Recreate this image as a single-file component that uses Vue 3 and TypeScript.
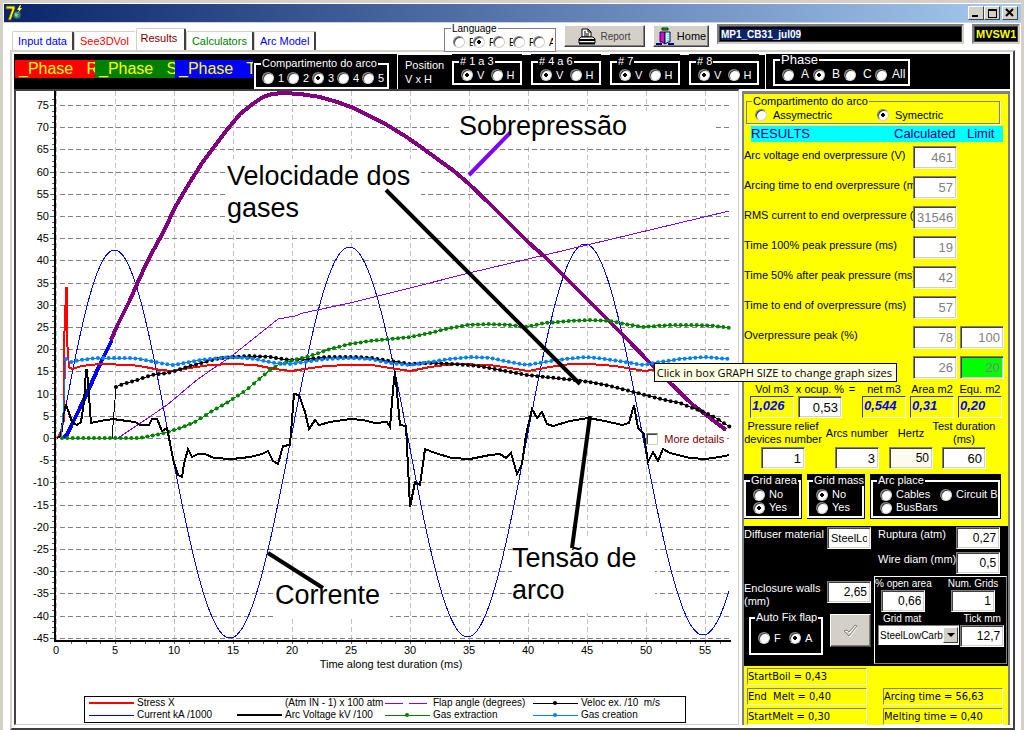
<script setup lang="ts">
import { onMounted, ref } from 'vue'

type Point = [number, number]

const fileInput = ref<HTMLInputElement | null>(null)
const fileName = ref('MP1_CB31_jul09')

onMounted(() => {
  fileInput.value?.focus()
  fileInput.value?.select()
})

const tabs = [
  { name: 'Input data', cls: 'blue' },
  { name: 'See3DVol', cls: 'red' },
  { name: 'Results', cls: 'active' },
  { name: 'Calculators', cls: 'green' },
  { name: 'Arc Model', cls: 'blue' },
]
const languages = ['E', 'F', 'E', 'F', 'A']
const phases = [
  { text: '_Phase   R', cls: 'bg-red' },
  { text: '_Phase   S', cls: 'bg-green' },
  { text: '_Phase   T', cls: 'bg-blue' },
]
const positions = ['# 1 a 3', '# 4 a 6', '# 7', '# 8']
const phaseOptions = ['A', 'B', 'C', 'All']

const results = [
  { label: 'Arc voltage end overpressure (V)', value: '461' },
  { label: 'Arcing time to end overpressure (ms)', value: '57' },
  { label: 'RMS current to end overpressure (A)', value: '31546' },
  { label: 'Time 100% peak pressure (ms)', value: '19' },
  { label: 'Time 50% after peak pressure (ms)', value: '42' },
  { label: 'Time to end of overpressure (ms)', value: '57' },
  { label: 'Overpressure peak (%)', value: '78', limit: '100' },
  { label: '', value: '26', limit: '20', ok: true },
]

// Plot geometry
const originX = 56
const originY = 438
const msStep = 11.8
const unitStep = 4.44
const markerStep = 16 / 3
const xAt = (t: number) => Math.round(originX + t * msStep)
const yAt = (v: number) => Math.round(originY - v * unitStep)

const xMajor = Array.from({ length: 12 }, (_, i) => i * 5)
const yMajor = Array.from({ length: 25 }, (_, i) => i * 5 - 45)
const xMinor = Array.from({ length: 45 }, (_, i) => (i + 1) * 1.25)
const yMinor = Array.from({ length: 98 }, (_, i) => i * 1.25 - 45)

const line = (pts: Point[]) => pts.map((p) => p.join(',')).join(' ')

function markers(pts: Point[]): Point[] {
  const out: Point[] = []
  let seg = 0
  for (let x = pts[0][0]; x <= pts[pts.length - 1][0]; x += markerStep) {
    while (seg < pts.length - 2 && pts[seg + 1][0] < x) seg++
    const [x0, y0] = pts[seg]
    const [x1, y1] = pts[seg + 1]
    out.push([x, y0 + ((y1 - y0) * (x - x0)) / (x1 - x0)])
  }
  return out
}

// Half waves of the current: zero crossings and peak heights
const crossings = [60, 169, 291, 408, 527, 643, 763]
const peaks = [188, -200, 191, -199, 194, -197]
const current: Point[] = []
for (let x = 61; x <= 729; x += 2) {
  let i = 0
  while (x > crossings[i + 1]) i++
  const phase = (x - crossings[i]) / (crossings[i + 1] - crossings[i])
  current.push([x, originY - peaks[i] * Math.sin(Math.PI * phase)])
}

const pressureStart: Point[] = [[63, 438], [67, 435], [71, 426], [80, 408], [88, 391], [100, 364], [112, 340]]
const pressure: Point[] = [[111, 340], [117, 326], [130, 300], [137, 284], [148, 260], [165, 229], [174, 209], [190, 182], [202, 163], [214, 147], [226, 131], [240, 114], [254, 103], [263, 97], [272, 94], [283, 93], [300, 94], [320, 97], [337, 102], [351, 107], [370, 116], [387, 125], [405, 136], [421, 147], [440, 161], [454, 171], [469, 184], [490, 204], [528, 242], [545, 257], [575, 287], [610, 322], [628, 340], [647, 360], [667, 380], [693, 405], [726, 430]]
const stress: Point[] = [[57, 438], [60, 434], [62, 427], [64, 420], [64, 340], [65, 322], [66, 288], [67, 288], [67, 340], [69, 367], [72, 369], [82, 366], [100, 364], [132, 365], [145, 367], [160, 370], [173, 371], [190, 368], [210, 365], [232, 364], [255, 365], [275, 369], [291, 371], [305, 369], [325, 366], [350, 365], [372, 365], [390, 368], [410, 371], [430, 367], [455, 364], [490, 365], [510, 368], [528, 371], [550, 367], [570, 364], [590, 364], [615, 366], [645, 371], [665, 368], [700, 365], [729, 367]]
const creation: Point[] = [[61, 438], [64, 400], [66, 359], [71, 362], [80, 360], [97, 358], [115, 358], [133, 358], [150, 361], [165, 364], [173, 365], [185, 363], [200, 360], [220, 358], [235, 357], [255, 359], [275, 363], [290, 364], [305, 362], [325, 359], [350, 358], [370, 359], [390, 363], [410, 365], [430, 362], [450, 359], [470, 357], [490, 358], [510, 362], [527, 365], [545, 362], [565, 359], [587, 357], [605, 359], [625, 362], [643, 365], [660, 362], [680, 359], [705, 357], [729, 359]]
const velocity: Point[] = [[116, 387], [123, 384], [137, 380], [152, 375], [167, 373], [175, 371], [190, 366], [205, 362], [215, 359], [232, 357], [250, 356], [270, 357], [290, 360], [310, 359], [327, 357], [355, 357], [372, 358], [390, 361], [410, 364], [430, 363], [450, 364], [470, 365], [490, 368], [510, 372], [527, 375], [545, 377], [575, 380], [590, 382], [610, 386], [630, 391], [645, 395], [665, 400], [680, 403], [690, 407], [704, 412], [716, 418], [722, 422], [730, 427]]
const extraction: Point[] = [[62, 438], [140, 438], [150, 436], [165, 433], [180, 428], [195, 422], [212, 411], [228, 402], [245, 391], [258, 380], [270, 370], [280, 364], [290, 361], [310, 356], [330, 349], [350, 344], [370, 341], [390, 339], [411, 337], [430, 333], [450, 328], [468, 325], [490, 324], [510, 325], [525, 327], [545, 323], [570, 321], [590, 320], [610, 321], [625, 324], [643, 327], [670, 325], [700, 325], [715, 326], [730, 328]]
const flap: Point[] = [[118, 438], [145, 420], [167, 405], [198, 379], [233, 355], [278, 319], [295, 316], [303, 313], [350, 303], [410, 288], [469, 273], [528, 259], [587, 245], [700, 218], [729, 211]]
const voltage: Point[] = [[57, 438], [61, 436], [64, 410], [66, 405], [68, 410], [72, 422], [77, 425], [81, 422], [84, 402], [86, 370], [87, 370], [91, 423], [100, 421], [113, 419], [127, 421], [135, 422], [140, 425], [149, 425], [152, 419], [157, 419], [162, 431], [167, 428], [170, 443], [174, 463], [178, 475], [182, 477], [184, 464], [188, 449], [192, 457], [198, 454], [205, 454], [214, 458], [232, 459], [250, 457], [262, 454], [268, 451], [273, 461], [278, 464], [283, 446], [290, 445], [294, 394], [299, 395], [305, 412], [309, 429], [315, 420], [319, 425], [330, 422], [350, 419], [363, 420], [375, 423], [387, 422], [390, 427], [393, 390], [395, 371], [400, 425], [406, 426], [410, 507], [415, 482], [420, 485], [425, 449], [435, 453], [452, 458], [470, 459], [490, 455], [500, 454], [506, 458], [511, 453], [517, 474], [522, 464], [526, 435], [532, 409], [537, 418], [542, 412], [547, 424], [553, 426], [570, 421], [588, 418], [605, 421], [622, 425], [629, 423], [634, 405], [638, 428], [644, 434], [648, 462], [653, 452], [658, 461], [663, 449], [670, 453], [690, 458], [705, 459], [720, 457], [729, 455]]

const plotLegend = [
  { x: 89, y: 703, label: 'Stress X', cls: 's-stress' },
  { x: 89, y: 715, label: 'Current kA /1000', cls: 's-current' },
  { x: 237, y: 703, label: '(Atm IN - 1) x 100 atm', cls: '' },
  { x: 237, y: 715, label: 'Arc Voltage kV /100', cls: 's-voltage' },
  { x: 385, y: 703, label: 'Flap angle (degrees)', cls: 's-flap dashed' },
  { x: 385, y: 715, label: 'Gas extraction', cls: 's-extraction', dot: 'd-extraction' },
  { x: 533, y: 703, label: 'Veloc ex. /10  m/s', cls: 's-velocity', dot: 'd-velocity' },
  { x: 533, y: 715, label: 'Gas creation', cls: 's-creation', dot: 'd-creation' },
]
</script>

<template>
  <div class="window">
    <header class="titlebar">
      <svg class="logo" width="18" height="18" viewBox="0 0 18 18" aria-hidden="true">
        <path d="M1 2h9v3L6 16H3L7 5H1z" fill="#ffee20" stroke="#4a4a10" />
        <circle cx="12" cy="11" r="4" fill="#2f8f5f" stroke="#335" />
        <path d="M10 9l3 1-1 3-2-1z" fill="#7fd0c0" />
        <path d="M15 1l-3 5h2l-1 3 4-5h-2l1-3z" fill="#ffff30" />
      </svg>
      <div class="controls">
        <button type="button" aria-label="Minimize"><svg width="10" height="10"><path d="M1 8h6" stroke="#000" stroke-width="2" /></svg></button>
        <button type="button" aria-label="Maximize"><svg width="10" height="10" shape-rendering="crispEdges"><path d="M1 1h8v8H1zM1 2h8" fill="none" stroke="#000" /></svg></button>
        <button type="button" class="close" aria-label="Close"><svg width="10" height="10"><path d="M1 1l7 7M8 1l-7 7" stroke="#000" stroke-width="2" /></svg></button>
      </div>
    </header>

    <div class="head">
      <nav class="tabs" role="tablist">
        <button v-for="t in tabs" :key="t.name" type="button" role="tab" class="tab" :class="t.cls">{{ t.name }}</button>
      </nav>
      <div class="tools">
        <fieldset class="group lang">
          <legend>Language</legend>
          <label v-for="(l, i) in languages" :key="i" class="opt"><input type="radio" name="lang" :checked="i === 1" />{{ l }}</label>
        </fieldset>
        <button type="button" class="btn report">
          <svg width="18" height="17" viewBox="0 0 18 17" aria-hidden="true">
            <path d="M4 9V1h6l3 3v5z" fill="#fff" stroke="#000" />
            <path d="M10 1v3h3M6 4h2M6 6h5M6 8h5" fill="none" stroke="#000" />
            <path d="M3 9h12l2 2v4H1v-4z" fill="#fff" stroke="#000" />
            <path d="M1 12h16M1 15.500h16" stroke="#000" stroke-width="2" />
            <path d="M12 10h2" stroke="#cc0" />
          </svg>
          <span>Report</span>
        </button>
        <button type="button" class="btn home">
          <svg width="18" height="18" viewBox="0 0 18 18" aria-hidden="true">
            <path d="M6 1h6v2H6z" fill="#0c0" stroke="#030" />
            <path d="M4 5h5v12l-3-2H4z" fill="#d010c0" stroke="#206" />
            <path d="M9 5h5v10h-2L9 17z" fill="#c8ffff" stroke="#005" />
            <path d="M0 17h6M12 17h6" stroke="#008" stroke-width="2" />
            <path d="M12 7v8" stroke="#0cc" stroke-dasharray="1 1" />
          </svg>
          <span>Home</span>
        </button>
        <input ref="fileInput" v-model="fileName" class="file" type="text" aria-label="File name" />
        <input class="file unit" type="text" value="MVSW1" aria-label="Unit" />
      </div>
    </div>

    <div class="page">
      <div class="toolbar">
        <div class="phases">
          <span v-for="p in phases" :key="p.text" :class="p.cls">{{ p.text }}</span>
        </div>
        <fieldset class="group arco">
          <legend>Compartimento do arco</legend>
          <label v-for="n in 5" :key="n" class="opt"><input type="radio" name="arco" :checked="n === 3" />{{ n }}</label>
        </fieldset>
        <div class="position">
          <p>Position<br />V x H</p>
          <div v-for="p in positions" :key="p" class="mask">
            <fieldset class="group vh">
              <legend>{{ p }}</legend>
              <label class="opt"><input type="radio" :name="p" checked />V</label>
              <label class="opt"><input type="radio" :name="p" />H</label>
            </fieldset>
          </div>
        </div>
        <fieldset class="group phase">
          <legend>Phase</legend>
          <label v-for="o in phaseOptions" :key="o" class="opt"><input type="radio" name="phase" :checked="o === 'B'" />{{ o }}</label>
        </fieldset>
      </div>

      <main class="main">
        <section class="chart">
          <svg class="plot" viewBox="16 91 722 632" role="img" aria-label="Arc test results">
            <g class="grid-x">
              <line v-for="t in xMajor" :key="t" :x1="xAt(t)" :x2="xAt(t)" y1="91" y2="640" />
            </g>
            <g class="grid-y">
              <line v-for="v in yMajor" :key="v" x1="60" x2="730" :y1="yAt(v)" :y2="yAt(v)" />
            </g>
            <g fill="#fff">
              <rect x="452" y="111" width="262" height="34" />
              <rect x="225" y="159" width="196" height="72" />
              <rect x="512" y="538" width="143" height="75" />
              <rect x="273" y="577" width="117" height="42" />
            </g>
            <g class="ticks">
              <line v-for="v in yMinor" :key="v" x1="52" x2="54" :y1="yAt(v)" :y2="yAt(v)" />
              <line v-for="v in yMajor" :key="v" x1="50" x2="54" :y1="yAt(v)" :y2="yAt(v)" />
              <line v-for="t in xMinor" :key="t" :x1="xAt(t)" :x2="xAt(t)" y1="642" y2="644" />
            </g>
            <path d="M55 91V641H731" fill="none" stroke="#000" stroke-width="2" />
            <g class="labels">
              <text v-for="v in yMajor" :key="v" x="49" :y="yAt(v) + 4" text-anchor="end">{{ v }}</text>
              <text v-for="t in xMajor" :key="t" :x="xAt(t)" y="654" text-anchor="middle">{{ t }}</text>
              <text x="391" y="668" text-anchor="middle">Time along test duration (ms)</text>
            </g>

            <polyline class="s-current" :points="line(current)" />
            <polyline class="s-flap" :points="line(flap)" />
            <polyline class="s-start" :points="line(pressureStart)" />
            <polyline class="s-pressure" :points="line(pressure)" />
            <polyline class="s-stress" :points="line(stress)" />
            <polyline class="s-velocity" points="62,438 112,438 116,387" />
            <polyline class="s-velocity" :points="line(velocity)" />
            <circle v-for="(m, i) in markers(velocity)" :key="i" class="d-velocity" :cx="m[0]" :cy="m[1]" r="2" />
            <polyline class="s-extraction" :points="line(extraction)" />
            <circle v-for="(m, i) in markers(extraction)" :key="i" class="d-extraction" :cx="m[0]" :cy="m[1]" r="2" />
            <polyline class="s-voltage" :points="line(voltage)" />
            <polyline class="s-creation" :points="line(creation)" />
            <circle v-for="(m, i) in markers(creation.slice(2))" :key="i" class="d-creation" :cx="m[0]" :cy="m[1]" r="2" />

            <path d="M510 133L469 175" stroke="#7f00ff" stroke-width="4" />
            <path d="M386 190L580 384M590 416L572 548M268 553L323 588" stroke="#000" stroke-width="4" />
            <g class="notes">
              <text x="459" y="135">Sobrepressão</text>
              <text x="227" y="185">Velocidade dos</text>
              <text x="227" y="217">gases</text>
              <text x="512" y="567">Tensão de</text>
              <text x="512" y="599">arco</text>
              <text x="275" y="604">Corrente</text>
            </g>

            <rect x="84" y="696" width="601" height="26" fill="#fff" stroke="#000" shape-rendering="crispEdges" />
            <g v-for="item in plotLegend" :key="item.label" class="key">
              <line v-if="item.cls" :class="item.cls" :x1="item.x" :x2="item.x + 45" :y1="item.y" :y2="item.y" />
              <circle v-if="item.dot" :class="item.dot" :cx="item.x + 22" :cy="item.y" r="2" />
              <text :x="item.x + 48" :y="item.y + 3">{{ item.label }}</text>
            </g>
          </svg>
          <label class="details"><input type="checkbox" />More details</label>
        </section>

        <aside class="side">
          <fieldset class="group sym">
            <legend>Compartimento do arco</legend>
            <label class="opt"><input type="radio" name="sym" />Assymectric</label>
            <label class="opt"><input type="radio" name="sym" checked />Symectric</label>
          </fieldset>
          <div class="resbar"><span>RESULTS</span><span>Calculated</span><span>Limit</span></div>
          <div class="results">
            <div v-for="(r, i) in results" :key="i" class="row">
              <label :for="'res' + i">{{ r.label }}</label>
              <input :id="'res' + i" class="field dim" type="text" :value="r.value" :aria-label="r.label || 'Calculated'" />
              <input v-if="r.limit" class="field dim" :class="{ ok: r.ok }" type="text" :value="r.limit" aria-label="Limit" />
            </div>
          </div>

          <div class="volumes">
            <div class="cell"><span>Vol m3</span><output class="calc">1,026</output></div>
            <label class="cell"><span>x ocup. %</span><input class="field" type="text" value="0,53" /></label>
            <div class="cell"><span>=</span></div>
            <div class="cell"><span>net m3</span><output class="calc">0,544</output></div>
            <div class="cell"><span>Area m2</span><output class="calc">0,31</output></div>
            <div class="cell"><span>Equ. m2</span><output class="calc">0,20</output></div>
          </div>

          <div class="params">
            <label class="cell"><span>Pressure relief<br />devices number</span><input class="field" type="text" value="1" /></label>
            <label class="cell"><span>Arcs number</span><input class="field" type="text" value="3" /></label>
            <label class="cell"><span>Hertz</span><input class="field cream" type="text" value="50" /></label>
            <label class="cell"><span>Test duration<br />(ms)</span><input class="field" type="text" value="60" /></label>
          </div>

          <div class="gridopts">
            <div class="black">
              <fieldset class="group stack">
                <legend>Grid area</legend>
                <label class="opt"><input type="radio" name="ga" />No</label>
                <label class="opt"><input type="radio" name="ga" checked />Yes</label>
              </fieldset>
            </div>
            <div class="black">
              <fieldset class="group stack">
                <legend>Grid mass</legend>
                <label class="opt"><input type="radio" name="gm" checked />No</label>
                <label class="opt"><input type="radio" name="gm" />Yes</label>
              </fieldset>
            </div>
            <div class="black wide">
              <fieldset class="group stack two">
                <legend>Arc place</legend>
                <label class="opt"><input type="radio" name="ap" />Cables</label>
                <label class="opt"><input type="radio" name="ap" />Circuit Breaker</label>
                <label class="opt"><input type="radio" name="ap" />BusBars</label>
              </fieldset>
            </div>
          </div>

          <div class="dark">
            <div class="dleft">
              <label class="line"><span>Diffuser material</span><input class="field text" type="text" value="SteelLo" /></label>
              <label class="line"><span>Enclosure walls<br />(mm)</span><input class="field small" type="text" value="2,65" /></label>
              <div class="line fix">
                <fieldset class="group flapfix">
                  <legend>Auto Fix flap</legend>
                  <label class="opt"><input type="radio" name="fix" />F</label>
                  <label class="opt"><input type="radio" name="fix" checked />A</label>
                </fieldset>
                <button type="button" class="btn check" aria-label="Apply">
                  <svg width="16" height="14" viewBox="0 0 16 14"><path d="M2 8l3-1 2 2 5-7 2 1-7 10z" fill="#d4d0c8" stroke="#fff" /><path d="M1 7l3-1 2 2 6-7 2 1-8 10z" fill="none" stroke="#808080" /></svg>
                </button>
              </div>
            </div>
            <div class="dright">
              <label class="line"><span>Ruptura (atm)</span><input class="field small" type="text" value="0,27" /></label>
              <label class="line"><span>Wire diam (mm)</span><input class="field small" type="text" value="0,5" /></label>
              <div class="gridbox">
                <div class="pair spaced">
                  <label class="cell"><span>% open area</span><input class="field small" type="text" value="0,66" /></label>
                  <label class="cell"><span>Num. Grids</span><input class="field small" type="text" value="1" /></label>
                </div>
                <div class="pair">
                  <label class="cell"><span class="mat">Grid mat</span>
                    <span class="pick">
                      <select><option>SteelLowCarb</option></select>
                      <i aria-hidden="true"></i>
                    </span>
                  </label>
                  <label class="cell"><span>Tick mm</span><input class="field small" type="text" value="12,7" /></label>
                </div>
              </div>
            </div>
          </div>

          <div class="outputs">
            <output>StartBoil = 0,43</output><span></span>
            <output>End&nbsp; Melt = 0,40</output><output>Arcing time = 56,63</output>
            <output>StartMelt = 0,30</output><output>Melting time = 0,40</output>
          </div>
        </aside>

        <div class="tip" role="tooltip">Click in box GRAPH SIZE to change graph sizes</div>
      </main>
    </div>
  </div>
</template>

<style>
body {
  margin: 0;
  background: #fff;
}
</style>

<style scoped>
* {
  box-sizing: border-box;
}
.window {
  min-height: 100vh;
  border: 3px solid #d4d0c8;
  border-bottom: 0;
  padding: 1px 0 0 1px;
  background: #fff;
  font: 11px/13px "Liberation Sans", Arial, sans-serif;
  color: #000;
}
button,
input,
select {
  font: inherit;
  margin: 0;
  padding: 0;
  border-radius: 0;
}
p {
  margin: 0;
}
.titlebar {
  height: 19px;
  border-bottom: 1px solid #d4d0c8;
  background: linear-gradient(90deg, #0a246a, #a6caf0);
  display: flex;
  justify-content: space-between;
}
.logo {
  margin-left: 1px;
}
.controls {
  display: flex;
  padding: 2px 3px 0 0;
}
.controls button {
  width: 16px;
  height: 14px;
  display: flex;
  align-items: center;
  justify-content: center;
  background: #d4d0c8;
  border: 1px solid;
  border-color: #fff #404040 #404040 #fff;
}
.controls .close {
  margin-left: 2px;
}
.head {
  display: flex;
  align-items: flex-start;
  justify-content: space-between;
  height: 30px;
  margin-bottom: -3px;
  padding: 0 1px 0 8px;
}
.tabs {
  display: flex;
  align-items: flex-end;
  height: 27px;
}
.tab {
  height: 19px;
  min-width: 58px;
  padding: 0 5px;
  background: #fff;
  border: 1px solid #d4d0c8;
  border-right: 2px solid #404040;
  border-bottom: 0;
  border-radius: 2px 2px 0 0;
  white-space: nowrap;
}
.tab.blue {
  color: #00f;
}
.tab.red {
  color: #f00;
  border-right-color: #fff;
}
.tab.green {
  color: #008000;
}
.tab.active {
  color: #800000;
  height: 22px;
  min-width: 50px;
  padding: 0 6px 3px 3px;
}
.tools {
  position: relative;
  display: flex;
  gap: 8px;
  padding-top: 1px;
}
.group {
  margin: 0;
  min-width: 0;
  border: 2px solid #fff;
  padding: 0;
  display: flex;
  align-items: center;
}
.group legend {
  margin-left: 6px;
  padding: 0 1px;
  line-height: 11px;
  white-space: nowrap;
}
.opt {
  display: flex;
  align-items: center;
  gap: 4px;
  white-space: nowrap;
}
.opt input {
  appearance: none;
  flex: none;
  width: 12px;
  height: 12px;
  border: 1px solid;
  border-color: #808080 #d4d0c8 #d4d0c8 #808080;
  border-radius: 50%;
  background: #fff;
  box-shadow: inset 1px 1px 0 #404040;
}
.opt input:checked {
  background: radial-gradient(circle, #000 0 2px, #fff 2px);
}
.lang {
  width: 112px;
  height: 28px;
  border: 1px solid #808080;
  background: #fff;
  font-size: 10px;
  padding-left: 8px;
}
.lang legend {
  margin-left: -2px;
  line-height: 9px;
}
.lang .opt {
  width: 20px;
  overflow: hidden;
}
.btn {
  display: flex;
  align-items: center;
  justify-content: center;
  background: #d4d0c8;
  border: 1px solid;
  border-color: #fff #404040 #404040 #fff;
  box-shadow: inset -1px -1px 0 #808080;
}
.report {
  width: 81px;
  height: 22px;
  margin-top: 1px;
  gap: 4px;
  color: #404040;
  font-size: 10px;
}
.home {
  width: 56px;
  height: 22px;
  margin-top: 1px;
  gap: 3px;
}
.file {
  width: 247px;
  height: 20px;
  border: 2px solid #808080;
  border-right-color: #d4d0c8;
  border-bottom-color: #d4d0c8;
  outline: 1px solid #404040;
  outline-offset: -3px;
  background: #000;
  color: #fff;
  padding: 0 2px;
  font-weight: bold;
  font-size: 10px;
}
.file::selection {
  background: #0a246a;
  color: #fff;
}
.unit {
  width: 48px;
  color: #ff0;
  font-size: 11px;
}
.page {
  margin: 0 6px;
  border-left: 2px solid #d4d0c8;
  border-top: 2px solid #d4d0c8;
  border-right: 2px solid #404040;
  border-bottom: 2px solid #404040;
  padding: 2px 3px 3px 2px;
}
.toolbar {
  height: 35px;
  background: #000;
  color: #fff;
  display: flex;
  align-items: flex-start;
}
.phases {
  display: flex;
  width: 238px;
  overflow: hidden;
  margin: 6px 1px 0 1px;
  font-size: 16px;
  line-height: 18px;
  color: #ff0;
}
.phases span {
  flex: none;
  width: 80px;
  height: 18px;
  padding-left: 4px;
  overflow: hidden;
  white-space: pre;
}
.bg-red {
  background: #f00;
}
.bg-green {
  background: #008000;
}
.bg-blue {
  background: #00f;
}
.arco {
  width: 135px;
  height: 31px;
  margin-top: 4px;
  padding-left: 6px;
}
.arco legend {
  margin-left: -1px;
}
.arco .opt {
  width: 25px;
}
.position {
  position: relative;
  display: flex;
  height: 35px;
  width: 369px;
  margin-left: 8px;
  padding-left: 7px;
  gap: 9px;
  border: 1px solid #fff;
  border-bottom: 0;
}
.position p {
  width: 38px;
  line-height: 14px;
  margin-top: 1px;
  padding-top: 2px;
}
.mask {
  width: 70px;
  height: 32px;
  margin-top: -1px;
  padding-top: 2px;
  background: #000;
}
.vh {
  height: 29px;
  padding-left: 7px;
}
.vh legend {
  margin-left: -2px;
}
.vh .opt {
  width: 30px;
}
.phase {
  width: 137px;
  height: 32px;
  margin-left: 7px;
  font-size: 12px;
  padding-left: 7px;
}
.phase legend {
  margin-left: -2px;
  font-size: 13px;
}
.phase .opt {
  width: 31px;
  gap: 7px;
}
.phase .opt:last-child {
  gap: 5px;
}
.main {
  position: relative;
  display: flex;
  gap: 3px;
}
.chart {
  position: relative;
  flex: 1;
  min-width: 0;
  border: solid #404040;
  border-width: 2px 1px 1px 2px;
  border-right-color: #d4d0c8;
  border-bottom-color: #d4d0c8;
}
.plot {
  display: block;
  width: 100%;
  height: auto;
}
.grid-x line {
  stroke: #c0c0c0;
  stroke-dasharray: 5 3;
  shape-rendering: crispEdges;
}
.grid-y line {
  stroke: #808080;
  stroke-dasharray: 5 3;
  shape-rendering: crispEdges;
}
.ticks line {
  stroke: #606060;
  shape-rendering: crispEdges;
}
.labels text {
  font-size: 11px;
}
.notes text {
  font-size: 27px;
}
.key text {
  font-size: 10px;
  white-space: pre;
}
.key line {
  shape-rendering: crispEdges;
}
polyline {
  fill: none;
  shape-rendering: crispEdges;
}
.s-current {
  stroke: #00f;
  stroke-width: 1px;
}
.s-flap {
  stroke: #7f00ff;
  stroke-width: 1px;
}
.s-flap.dashed {
  stroke-dasharray: 18 6;
}
.s-start {
  stroke: #00f;
  stroke-width: 4px;
}
.s-pressure {
  stroke: #800080;
  stroke-width: 4px;
}
.s-stress {
  stroke: #f00;
  stroke-width: 2px;
}
.s-velocity {
  stroke: #000;
  stroke-width: 1px;
}
.s-voltage {
  stroke: #000;
  stroke-width: 2px;
}
.s-extraction {
  stroke: #008000;
  stroke-width: 1px;
}
.s-creation {
  stroke: #0080ff;
  stroke-width: 1px;
}
.d-velocity {
  fill: #000;
}
.d-extraction {
  fill: #008000;
}
.d-creation {
  fill: #0080ff;
}
.details {
  position: absolute;
  left: 87.3%;
  top: 54%;
  display: flex;
  align-items: center;
  gap: 6px;
  padding-right: 3px;
  background: #fff;
  color: #800000;
}
.details input {
  appearance: none;
  width: 12px;
  height: 12px;
  border: 1px solid;
  border-color: #808080 #d4d0c8 #d4d0c8 #808080;
  box-shadow: inset 1px 1px 0 #404040;
}
.side {
  width: 268px;
  margin-top: 2px;
  border: 2px solid #808080;
  border-top-width: 3px;
  border-bottom: 0;
  background: #ff0;
}
.sym {
  height: 28px;
  margin: 2px 8px 0 2px;
  border: 1px solid #808080;
  box-shadow: 1px 1px 0 #fff;
  padding-left: 8px;
}
.sym legend {
  margin-left: -3px;
}
.sym .opt {
  width: 123px;
  gap: 6px;
}
.resbar {
  display: grid;
  grid-template-columns: 143px 73px 1fr;
  margin: 2px 5px 0 7px;
  height: 16px;
  background: #0ff;
  color: #000080;
  font-size: 13px;
  line-height: 16px;
}
.results {
  display: grid;
  gap: 7px;
  margin-top: 4px;
}
.row {
  display: grid;
  grid-template-columns: 169px 44px 44px;
  column-gap: 0;
  height: 23px;
}
.row .field + .field {
  margin-left: 3px;
}
.row label {
  padding-top: 3px;
  overflow: hidden;
  white-space: nowrap;
}
.field {
  display: block;
  width: 44px;
  height: 22px;
  border: 1px solid;
  border-color: #808080 #fff #fff #808080;
  box-shadow: inset 1px 1px 0 #404040, inset -1px -1px 0 #d4d0c8;
  background: #fff;
  color: #000;
  padding: 0 3px;
  text-align: right;
  font-size: 13px;
}
.field.dim {
  height: 23px;
  color: #808080;
}
.field.ok {
  background: #0f0;
}
.field.cream {
  background: #fffaf0;
  font-size: 12px;
}
.field.small {
  font-size: 12px;
}
.field.text {
  text-align: left;
  font-size: 11px;
}
.cell {
  display: flex;
  flex-direction: column;
  align-items: center;
  white-space: nowrap;
}
.volumes {
  display: grid;
  grid-template-columns: 44px 44px 12px 44px 44px 44px;
  column-gap: 4px;
  margin: 4px 0 0 6px;
}
.calc {
  width: 44px;
  height: 22px;
  border: 1px solid;
  border-color: #404040 #fff #fff #404040;
  color: #00f;
  font: italic bold 13px/18px "Liberation Sans", Arial, sans-serif;
  padding-left: 1px;
}
.params {
  display: grid;
  grid-template-columns: 78px 66px 38px 64px;
  column-gap: 2px;
  margin-top: 1px;
}
.params .cell {
  justify-content: flex-end;
  text-align: center;
}
.params .cell > span {
  height: 28px;
  display: flex;
  align-items: center;
}
.gridopts {
  display: flex;
  gap: 5px;
  margin: 5px 7px 7px 0;
  color: #fff;
}
.black {
  width: 58px;
  height: 45px;
  padding: 1px 1px 1px 0;
  background: #000;
}
.black.wide {
  flex: 1;
  min-width: 0;
  padding-left: 1px;
}
.stack {
  height: 43px;
  display: grid;
  align-content: center;
  grid-auto-rows: 13px;
  padding-left: 7px;
  overflow: hidden;
}
.stack legend {
  margin-left: -3px;
}
.stack.two {
  grid-template-columns: 60px 1fr;
}
.dark {
  display: grid;
  grid-template-columns: 127px 1fr;
  column-gap: 3px;
  height: 140px;
  padding-top: 1px;
  background: #000;
  color: #fff;
}
.line {
  display: flex;
  justify-content: space-between;
  align-items: flex-start;
  white-space: nowrap;
}
.line > span {
  padding-top: 1px;
}
.dleft {
  display: grid;
  grid-template-rows: 54px 31px 1fr;
}
.fix {
  padding-left: 5px;
}
.flapfix {
  width: 74px;
  height: 43px;
  padding-left: 7px;
}
.flapfix legend {
  margin-left: -3px;
}
.flapfix .opt {
  width: 31px;
}
.check {
  width: 41px;
  height: 33px;
  margin-top: 2px;
}
.dright {
  display: grid;
  grid-template-rows: 25px 24px 1fr;
}
.dright > .line {
  padding: 0 9px 0 4px;
}
.gridbox {
  display: grid;
  grid-template-rows: 35px 38px;
  height: 88px;
  margin-right: 2px;
  border: 1px solid;
  border-color: #fff #808080 #808080 #fff;
  font-size: 10px;
}
.pair {
  display: flex;
  justify-content: space-between;
  padding: 0 2px 0 3px;
}
.pair.spaced {
  padding: 0 8px 0 0;
}
.mat {
  align-self: flex-start;
  padding-left: 5px;
}
.pick {
  position: relative;
  width: 81px;
}
.pick select {
  display: block;
  appearance: none;
  width: 100%;
  height: 20px;
  padding: 0 14px 0 1px;
  background: #fff;
  color: #000;
  border: 1px solid;
  border-color: #808080 #fff #fff #808080;
}
.pick i {
  position: absolute;
  right: 1px;
  top: 2px;
  width: 15px;
  height: 16px;
  background: #d4d0c8;
  border: 1px solid;
  border-color: #fff #404040 #404040 #fff;
  pointer-events: none;
}
.pick i::before {
  content: "";
  position: absolute;
  left: 3px;
  top: 5px;
  border: 4px solid transparent;
  border-top-color: #000;
  border-bottom: 0;
}
.outputs {
  display: grid;
  grid-template-columns: 120px 120px;
  column-gap: 16px;
  row-gap: 3px;
  padding: 2px 0 0 3px;
}
.outputs output {
  height: 17px;
  border: 1px solid;
  border-color: #808080 #fff #fff #808080;
  font: 11px/16px "DejaVu Sans Condensed", "Noto Sans", sans-serif;
  white-space: nowrap;
}
.tip {
  position: absolute;
  right: 113px;
  top: 274px;
  height: 19px;
  padding: 0 4px 0 2px;
  border: 1px solid #000;
  background: #ffffe1;
  font: 11px/17px "Open Sans", "Noto Sans", sans-serif;
  white-space: nowrap;
}
</style>
